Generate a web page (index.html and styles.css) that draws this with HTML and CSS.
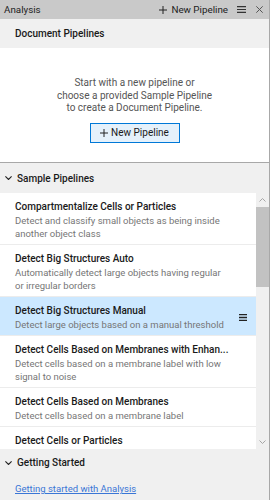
FILE: index.html
```html
<!DOCTYPE html>
<html lang="en">
<head>
    <meta charset="UTF-8">
    <title>Analysis</title>
    <link rel="stylesheet" href="styles.css">
</head>
<body>
    <div class="panel">
        <!-- Barra de título -->
        <div class="title-bar">
            <span class="title">Analysis</span>
            <span class="title-action">
                <svg width="8" height="8" viewBox="0 0 8 8"><path d="M4 0v8M0 4h8" stroke="#222" stroke-width="1"/></svg>
                New Pipeline
            </span>
            <svg class="title-menu" width="9" height="7" viewBox="0 0 9 7"><path d="M0 0.6h9M0 3.5h9M0 6.4h9" stroke="#333" stroke-width="1.1"/></svg>
            <svg width="7" height="7" viewBox="0 0 7 7"><path d="M0.3 0.3l6.4 6.4M6.7 0.3l-6.4 6.4" stroke="#555" stroke-width="1"/></svg>
        </div>

        <div class="section-head plain">Document Pipelines</div>

        <div class="empty">
            <p>Start with a new pipeline or<br>choose a provided Sample Pipeline<br>to create a Document Pipeline.</p>
            <button class="btn-new">
                <svg width="8" height="8" viewBox="0 0 8 8"><path d="M4 0v8M0 4h8" stroke="#222" stroke-width="1"/></svg>
                New Pipeline
            </button>
        </div>

        <div class="section-head">
            <svg width="7" height="4" viewBox="0 0 7 4"><path d="M0.4 0.4l3.1 3.1 3.1-3.1" fill="none" stroke="#222" stroke-width="1.1"/></svg>
            Sample Pipelines
        </div>

        <div class="list-wrap">
            <div class="list">
                <div class="item">
                    <div class="item-title">Compartmentalize Cells or Particles</div>
                    <div class="item-desc">Detect and classify small objects as being inside another object class</div>
                </div>
                <div class="item">
                    <div class="item-title">Detect Big Structures Auto</div>
                    <div class="item-desc">Automatically detect large objects having regular or irregular borders</div>
                </div>
                <div class="item selected">
                    <div class="item-text">
                        <div class="item-title">Detect Big Structures Manual</div>
                        <div class="item-desc">Detect large objects based on a manual threshold</div>
                    </div>
                    <svg class="item-menu" width="8" height="7" viewBox="0 0 8 7"><path d="M0 0.7h8M0 3.5h8M0 6.3h8" stroke="#222" stroke-width="1.3"/></svg>
                </div>
                <div class="item">
                    <div class="item-title">Detect Cells Based on Membranes with Enhan...</div>
                    <div class="item-desc">Detect cells based on a membrane label with low signal to noise</div>
                </div>
                <div class="item">
                    <div class="item-title">Detect Cells Based on Membranes</div>
                    <div class="item-desc">Detect cells based on a membrane label</div>
                </div>
                <div class="item last">
                    <div class="item-title">Detect Cells or Particles</div>
                </div>
            </div>
            <div class="scrollbar">
                <svg class="arrow" width="13" height="14" viewBox="0 0 13 14"><path d="M3.5 8.5l3-3 3 3" fill="none" stroke="#a6a6a6" stroke-width="1"/></svg>
                <div class="thumb"></div>
                <div class="track"></div>
                <svg class="arrow" width="13" height="14" viewBox="0 0 13 14"><path d="M3.5 5.5l3 3 3-3" fill="none" stroke="#a6a6a6" stroke-width="1"/></svg>
            </div>
        </div>

        <div class="section-head small">
            <svg width="7" height="4" viewBox="0 0 7 4"><path d="M0.4 0.4l3.1 3.1 3.1-3.1" fill="none" stroke="#222" stroke-width="1.1"/></svg>
            Getting Started
        </div>
        <div class="links">
            <a href="#" class="link">Getting started with Analysis</a>
        </div>
    </div>
</body>
</html>
```

FILE: styles.css
```css
/* Painel principal */
body {
  margin: 0;
  font-family: Roboto, "Liberation Sans", sans-serif;
  font-size: 9.5px;
  color: #1a1a1a;
  background-color: #f0f0f0;
}

.panel {
  width: 269px;
  height: 500px;
  border-right: 1px solid #a8a8a8;
  background-color: #f0f0f0;
  display: flex;
  flex-direction: column;
  overflow: hidden;
}

/* Barra de título */
.title-bar {
  height: 19px;
  flex-shrink: 0;
  background-color: #c9c9c9;
  display: flex;
  align-items: center;
  padding: 0 6px 0 4px;
  font-size: 9.8px;
  color: #222;
}

.title {
  flex: 1;
}

.title-action {
  display: flex;
  align-items: center;
  gap: 4px;
  margin-right: 9px;
}

.title-menu {
  margin-right: 10px;
}

/* Cabeçalhos de seção */
.section-head {
  height: 30px;
  flex-shrink: 0;
  display: flex;
  align-items: center;
  gap: 5px;
  padding-left: 5px;
  font-weight: 500;
  font-size: 10px;
  background-color: #f0f0f0;
}

.section-head.plain {
  height: 29px;
  padding-left: 15px;
}

.section-head.small {
  height: 27px;
}

/* Área vazia */
.empty {
  height: 114px;
  flex-shrink: 0;
  background-color: #fff;
  border-bottom: 1px solid #a8a8a8;
  text-align: center;
  display: flex;
  flex-direction: column;
  align-items: center;
}

.empty p {
  margin: 29px 0 0;
  line-height: 12.5px;
  font-size: 10px;
  color: #555;
}

.btn-new {
  margin-top: 8px;
  width: 90px;
  height: 20px;
  border: 1px solid #0078d7;
  background-color: #e5f1fb;
  font-family: inherit;
  font-size: 10px;
  color: #1a1a1a;
  display: flex;
  align-items: center;
  justify-content: center;
  gap: 3px;
  padding: 0;
}

/* Lista de pipelines */
.list-wrap {
  height: 256px;
  flex-shrink: 0;
  display: flex;
  background-color: #fff;
}

.list {
  flex: 1;
  overflow: hidden;
}

.item {
  padding: 6px 9px 4px 15px;
  border-bottom: 1px solid #ececec;
}

.item.selected {
  background-color: #cce8ff;
  display: flex;
  align-items: center;
}

.item-text {
  flex: 1;
  margin-right: 4px;
}

.item.last {
  border-bottom: none;
}

.item-title {
  font-weight: 500;
  font-size: 10px;
  line-height: 15px;
  white-space: nowrap;
  overflow: hidden;
}

.item-desc {
  color: #767676;
  font-size: 9.5px;
  line-height: 13px;
  padding-right: 21px;
}

.selected .item-desc {
  padding-right: 0;
}

/* Barra de rolagem */
.scrollbar {
  width: 13px;
  background-color: #f0f0f0;
  display: flex;
  flex-direction: column;
}

.arrow {
  display: block;
}

.thumb {
  height: 80px;
  background-color: #c2c2c2;
}

.track {
  flex: 1;
}

/* Links */
.links {
  padding: 7px 15px;
}

.link {
  color: #3a76d6;
  font-size: 9.5px;
}
```
